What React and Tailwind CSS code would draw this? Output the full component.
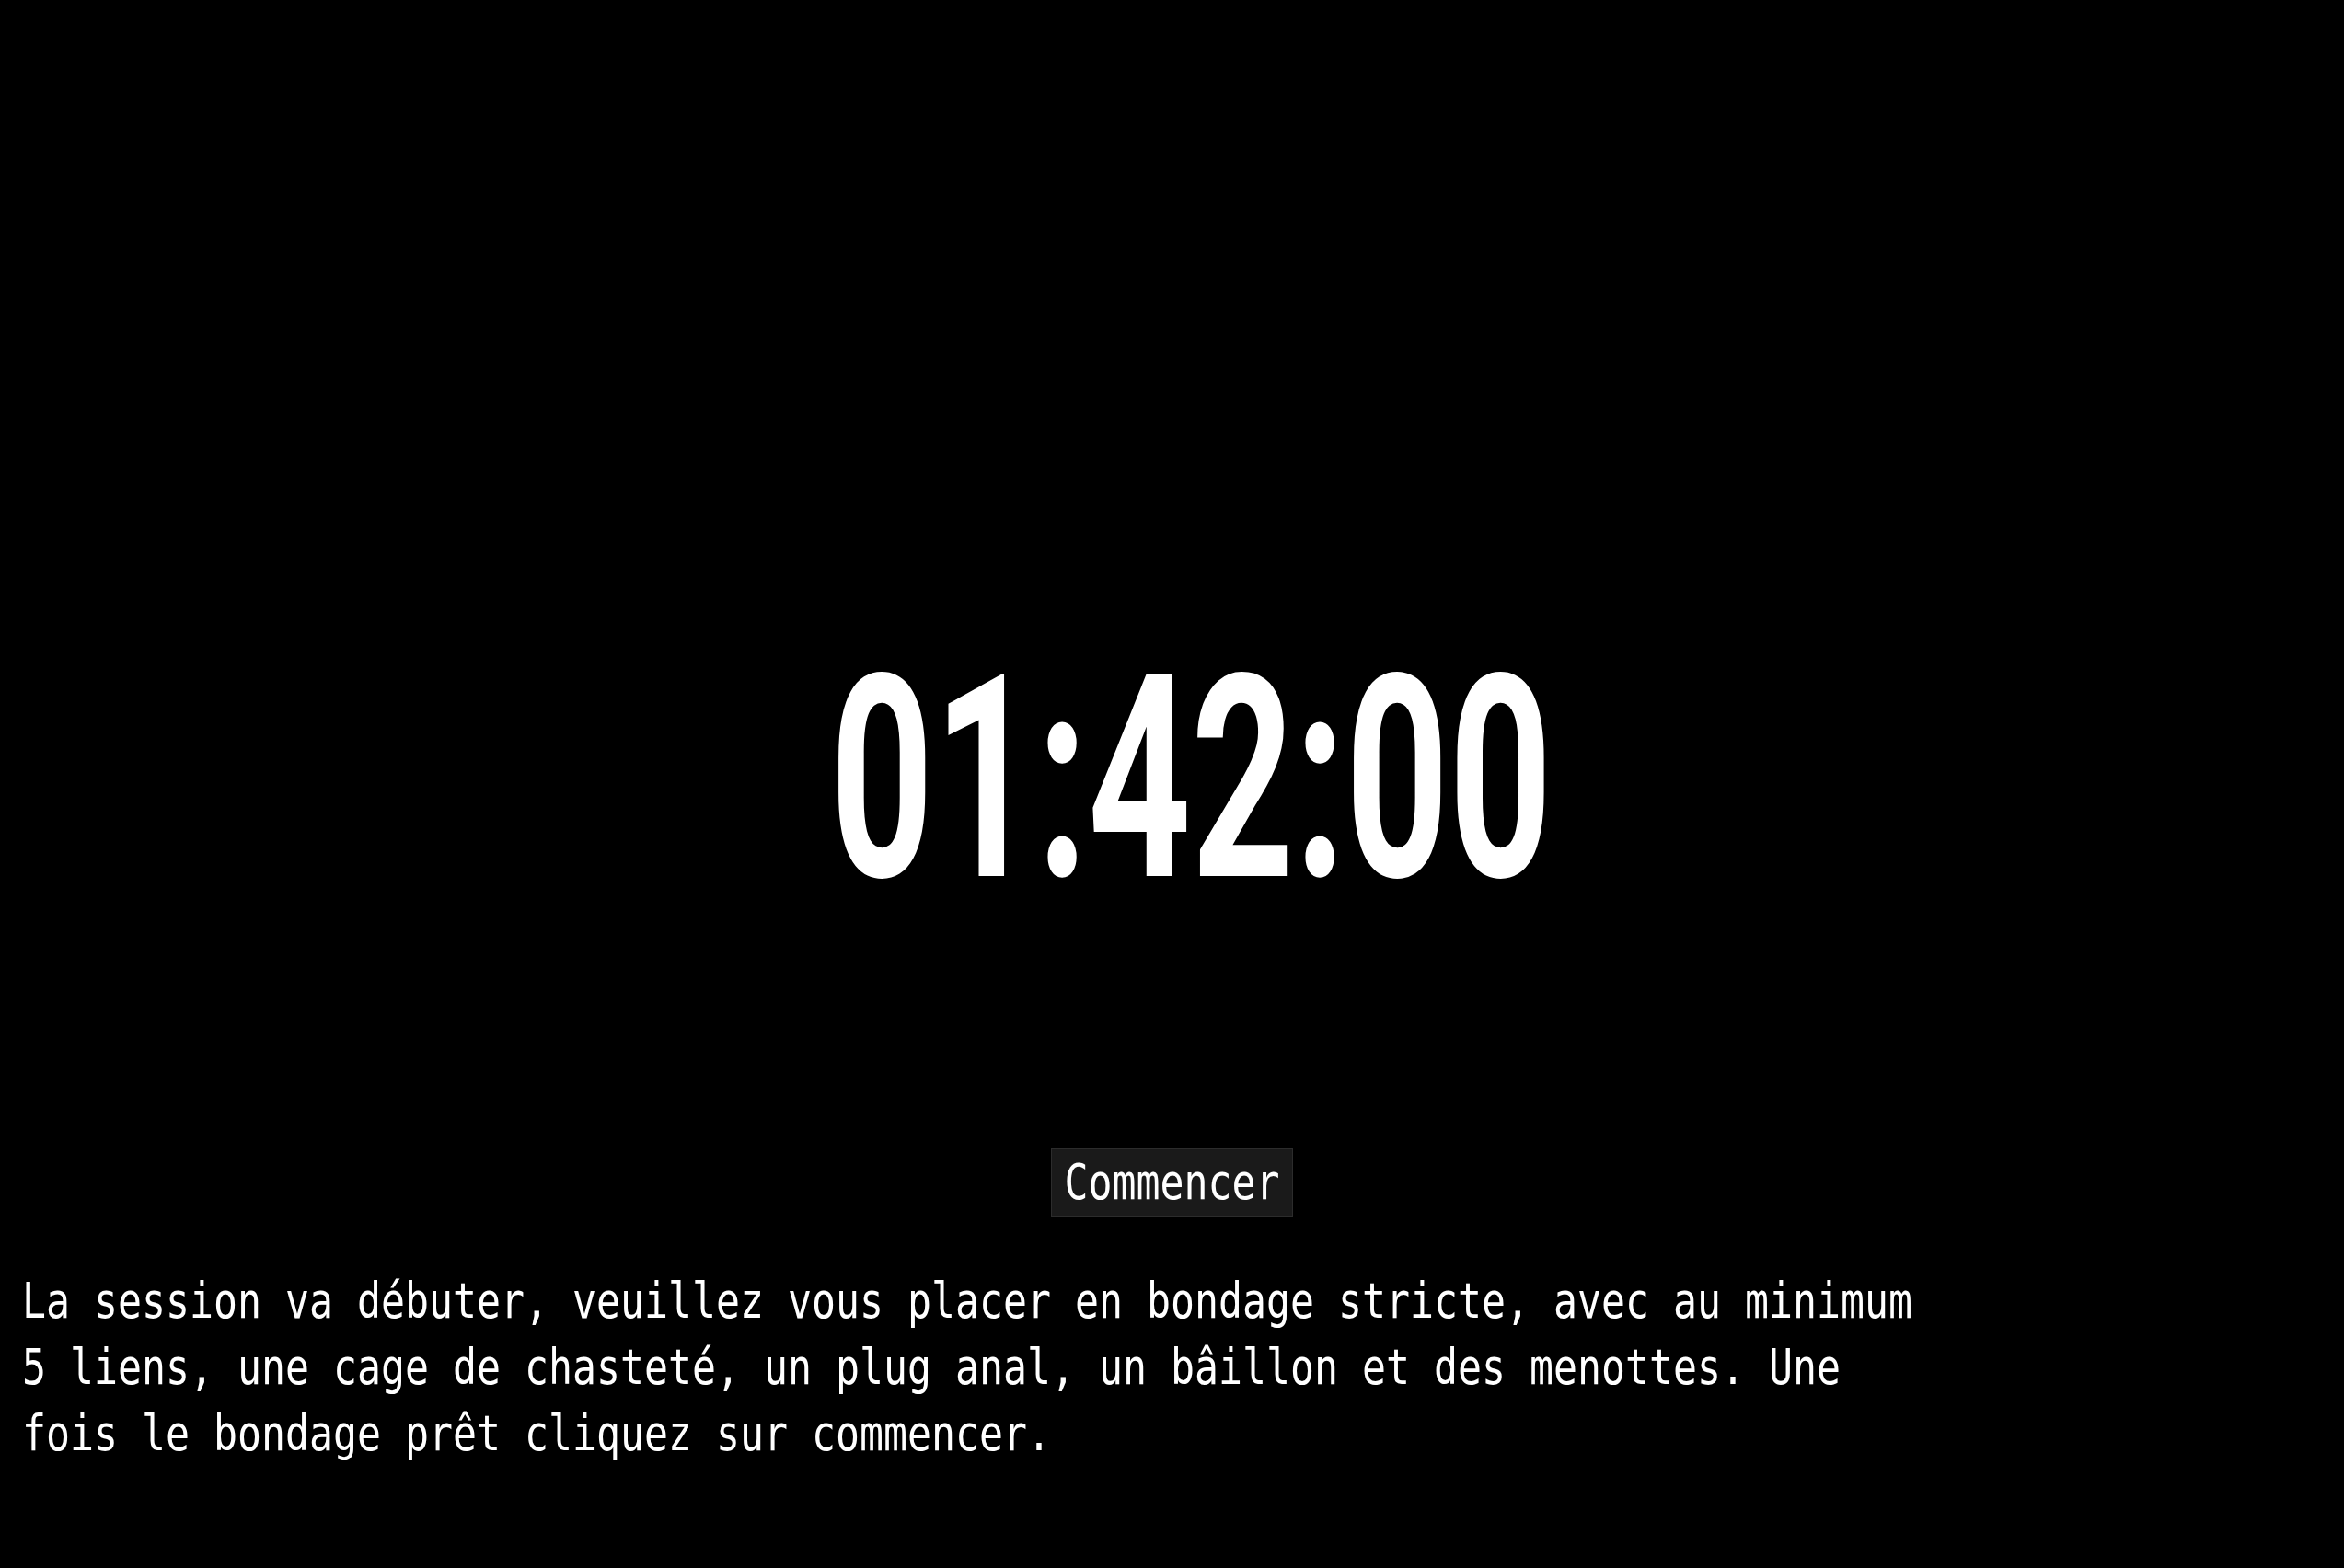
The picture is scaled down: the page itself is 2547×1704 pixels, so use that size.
export default function App() {
  return (
    <div className="w-full h-screen bg-black overflow-hidden text-white font-['DejaVu_Sans_Mono',monospace]">
      <div className="flex flex-col pt-[693px]">
        <div className="flex pl-[902px] h-[308px]">
          <span className="inline-block origin-left scale-x-[0.636] font-['Roboto',sans-serif] font-bold text-[308px] leading-none whitespace-nowrap">
            01:42:00
          </span>
        </div>
        <button className="self-center mt-[247px] w-[263px] h-[75px] flex items-center justify-center bg-[#1a1a1a] border border-[#2c2c2c] text-white">
          <span className="inline-block scale-y-[1.237] text-[43.2px] leading-none font-['DejaVu_Sans_Mono',monospace]">
            Commencer
          </span>
        </button>
        <p className="mt-[56px] pl-6 w-[2104px] origin-top scale-y-[1.237] text-[43.2px] leading-[57.8px]">
          La session va débuter, veuillez vous placer en bondage stricte, avec au minimum 5 liens, une cage de chasteté, un plug anal, un bâillon et des menottes. Une fois le bondage prêt cliquez sur commencer.
        </p>
      </div>
    </div>
  );
}
